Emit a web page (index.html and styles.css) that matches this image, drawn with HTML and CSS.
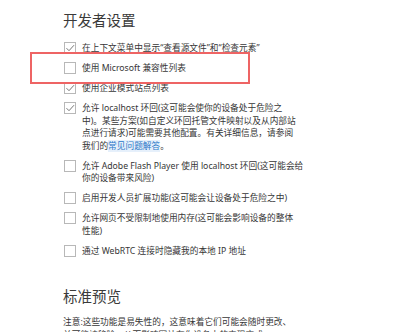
FILE: index.html
```html
<!DOCTYPE html>
<html lang="zh-CN">
<head>
<meta charset="utf-8">
<link rel="stylesheet" href="styles.css">
</head>
<body>
<div class="page">
  <h1 class="title">开发者设置</h1>
  <ul class="opts">
    <li class="opt"><span class="box"><svg viewBox="0 0 12 12"><polyline points="2.5,6.2 5,8.7 10,3.2"/></svg></span><span class="label">在上下文菜单中显示“查看源文件”和“检查元素”</span></li>
    <li class="opt"><span class="box"></span><span class="label">使用 Microsoft 兼容性列表</span></li>
    <li class="opt"><span class="box"><svg viewBox="0 0 12 12"><polyline points="2.5,6.2 5,8.7 10,3.2"/></svg></span><span class="label">使用企业模式站点列表</span></li>
    <li class="opt"><span class="box"><svg viewBox="0 0 12 12"><polyline points="2.5,6.2 5,8.7 10,3.2"/></svg></span><span class="label">允许 localhost 环回(这可能会使你的设备处于危险之<br>中)。某些方案(如自定义环回托管文件映射以及从内部站<br>点进行请求)可能需要其他配置。有关详细信息，请参阅<br>我们的<a class="link" href="#">常见问题解答</a>。</span></li>
    <li class="opt"><span class="box"></span><span class="label">允许 Adobe Flash Player 使用 localhost 环回(这可能会给<br>你的设备带来风险)</span></li>
    <li class="opt"><span class="box"></span><span class="label">启用开发人员扩展功能(这可能会让设备处于危险之中)</span></li>
    <li class="opt"><span class="box"></span><span class="label">允许网页不受限制地使用内存(这可能会影响设备的整体<br>性能)</span></li>
    <li class="opt"><span class="box"></span><span class="label">通过 WebRTC 连接时隐藏我的本地 IP 地址</span></li>
  </ul>
  <h2 class="title sub">标准预览</h2>
  <p class="note">注意:这些功能是易失性的，这意味着它们可能会随时更改、<br>并可能被移除，从而影响网站在你设备上的表现方式。</p>
  <div class="mark"></div>
</div>
</body>
</html>
```
FILE: styles.css
```css
html, body {
  margin: 0;
  padding: 0;
  background: #fff;
}
body {
  font-family: "Segoe UI", "Noto Sans", "Noto Sans CJK SC", sans-serif;
  color: #333;
  overflow: hidden;
}
.page {
  position: relative;
  padding: 10px 0 0 63px;
}
.title {
  margin: 0 0 12px;
  font-size: 14.5px;
  line-height: 20px;
  font-weight: normal;
  color: #3a3a3a;
}
.opts {
  list-style: none;
  margin: 0;
  padding: 0 0 0 1px;
}
.opt {
  display: flex;
  align-items: flex-start;
  gap: 6px;
  margin-bottom: 7.5px;
  font-size: 8.7px;
  line-height: 12.5px;
}
.box {
  flex: none;
  width: 10px;
  height: 10px;
  border: 1px solid #b8b8b8;
  background: #fff;
  display: flex;
}
.box svg {
  width: 12px;
  height: 12px;
  margin: -1px;
  fill: none;
  stroke: #777;
  stroke-width: 1;
}
.label {
  color: #363636;
}
.link {
  color: #2a78c8;
  text-decoration: none;
  background: #e6f0fb;
}
.sub {
  margin-top: 29px;
  margin-bottom: 10px;
}
.note {
  margin: 0;
  font-size: 8.7px;
  line-height: 12.5px;
  color: #363636;
}
.mark {
  position: absolute;
  left: 30px;
  top: 52px;
  width: 216px;
  height: 28px;
  border: 2px solid #ee6464;
}
```
